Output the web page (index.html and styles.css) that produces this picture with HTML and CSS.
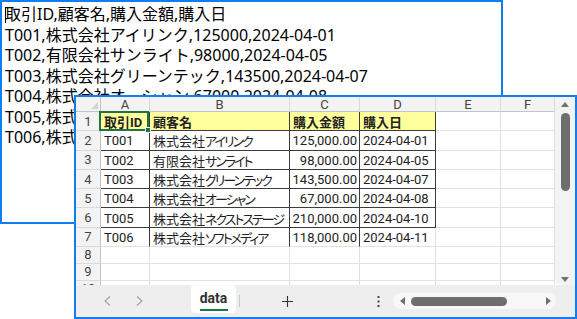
FILE: index.html
```html
<!DOCTYPE html>
<html lang="ja">
<head>
    <meta charset="UTF-8">
    <title>CSV と Excel</title>
    <link rel="stylesheet" href="styles.css">
</head>
<body>
    <div class="desk">
        <!-- text editor with the raw csv -->
        <div class="win editor">
            <div class="line"><span class="caret"></span>取引ID,顧客名,購入金額,購入日</div>
            <div class="line">T001,株式会社アイリンク,125000,2024-04-01</div>
            <div class="line">T002,有限会社サンライト,98000,2024-04-05</div>
            <div class="line">T003,株式会社グリーンテック,143500,2024-04-07</div>
            <div class="line">T004,株式会社オーシャン,67000,2024-04-08</div>
            <div class="line">T005,株式会社ネクストステージ,210000,2024-04-10</div>
            <div class="line">T006,株式会社ソフトメディア,118000,2024-04-11</div>
        </div>

        <!-- spreadsheet window -->
        <div class="win sheet">
            <div class="main">
                <div class="grid">
                    <div class="c corner"></div>
                    <div class="c hd">A</div>
                    <div class="c hd">B</div>
                    <div class="c hd">C</div>
                    <div class="c hd">D</div>
                    <div class="c hd">E</div>
                    <div class="c hd">F</div>

                    <div class="c rn">1</div>
                    <div class="c y b dr db sel">取引ID</div>
                    <div class="c y b dr db">顧客名</div>
                    <div class="c y b dr db">購入金額</div>
                    <div class="c y b dr db">購入日</div>
                    <div class="c"></div>
                    <div class="c"></div>

                    <div class="c rn">2</div>
                    <div class="c dr db">T001</div>
                    <div class="c dr db">株式会社<span class="k">アイリンク</span></div>
                    <div class="c dr db num">125,000.00</div>
                    <div class="c dr db">2024-04-01</div>
                    <div class="c"></div>
                    <div class="c"></div>

                    <div class="c rn">3</div>
                    <div class="c dr db">T002</div>
                    <div class="c dr db">有限会社<span class="k">サンライト</span></div>
                    <div class="c dr db num">98,000.00</div>
                    <div class="c dr db">2024-04-05</div>
                    <div class="c"></div>
                    <div class="c"></div>

                    <div class="c rn">4</div>
                    <div class="c dr db">T003</div>
                    <div class="c dr db">株式会社<span class="k">グリーンテック</span></div>
                    <div class="c dr db num">143,500.00</div>
                    <div class="c dr db">2024-04-07</div>
                    <div class="c"></div>
                    <div class="c"></div>

                    <div class="c rn">5</div>
                    <div class="c dr db">T004</div>
                    <div class="c dr db">株式会社<span class="k">オーシャン</span></div>
                    <div class="c dr db num">67,000.00</div>
                    <div class="c dr db">2024-04-08</div>
                    <div class="c"></div>
                    <div class="c"></div>

                    <div class="c rn">6</div>
                    <div class="c dr db">T005</div>
                    <div class="c dr db">株式会社<span class="k">ネクストステージ</span></div>
                    <div class="c dr db num">210,000.00</div>
                    <div class="c dr db">2024-04-10</div>
                    <div class="c"></div>
                    <div class="c"></div>

                    <div class="c rn">7</div>
                    <div class="c dr">T006</div>
                    <div class="c dr">株式会社<span class="k">ソフトメディア</span></div>
                    <div class="c dr num">118,000.00</div>
                    <div class="c">2024-04-11</div>
                    <div class="c"></div>
                    <div class="c"></div>

                    <div class="c rn">8</div>
                    <div class="c"></div><div class="c"></div><div class="c"></div>
                    <div class="c"></div><div class="c"></div><div class="c"></div>

                    <div class="c rn">9</div>
                    <div class="c"></div><div class="c"></div><div class="c"></div>
                    <div class="c"></div><div class="c"></div><div class="c"></div>

                    <div class="c rn">10</div>
                    <div class="c"></div><div class="c"></div><div class="c"></div>
                    <div class="c"></div><div class="c"></div><div class="c"></div>
                </div>

                <div class="vscroll">
                    <svg width="8" height="5" viewBox="0 0 8 5"><polygon points="0,5 4,0 8,5" fill="#707070"/></svg>
                    <div class="vthumb"></div>
                    <svg class="down" width="8" height="5" viewBox="0 0 8 5"><polygon points="0,0 8,0 4,5" fill="#707070"/></svg>
                </div>
            </div>

            <div class="tabbar">
                <div class="nav first">
                    <svg width="7" height="10" viewBox="0 0 7 10"><polyline points="6,0.5 1,5 6,9.5" fill="none" stroke="#a0a0a0" stroke-width="1.1"/></svg>
                </div>
                <div class="nav">
                    <svg width="7" height="10" viewBox="0 0 7 10"><polyline points="1,0.5 6,5 1,9.5" fill="none" stroke="#a0a0a0" stroke-width="1.1"/></svg>
                </div>
                <div class="tab">
                    <span class="tab-name">data</span>
                    <span class="tab-line"></span>
                </div>
                <div class="sep"></div>
                <div class="plus">
                    <svg width="11" height="11" viewBox="0 0 11 11"><path d="M5.5 0v11M0 5.5h11" stroke="#333" stroke-width="1.1"/></svg>
                </div>
                <div class="more">
                    <svg width="3" height="11" viewBox="0 0 3 11"><rect x="0.5" y="0" width="2" height="2" fill="#444"/><rect x="0.5" y="4.5" width="2" height="2" fill="#444"/><rect x="0.5" y="9" width="2" height="2" fill="#444"/></svg>
                </div>
                <div class="htrack">
                    <svg width="5" height="8" viewBox="0 0 5 8"><polygon points="5,0 5,8 0,4" fill="#707070"/></svg>
                    <div class="hthumb"></div>
                    <svg class="right" width="5" height="8" viewBox="0 0 5 8"><polygon points="0,0 5,4 0,8" fill="#707070"/></svg>
                </div>
            </div>
        </div>
    </div>
</body>
</html>
```

FILE: styles.css
```css
body {
    margin: 0;
    background-color: #fff;
}

.desk {
    position: relative;
    width: 577px;
    height: 319px;
    overflow: hidden;
}

/* both windows sit on a free canvas */
.win {
    position: absolute;
    box-sizing: border-box;
    border: 2px solid #0f7ef2;
    background-color: #fff;
}

.editor {
    left: 0;
    top: 0;
    width: 503px;
    height: 224px;
    padding: 2px 0 0 3px;
    font-family: "Noto Sans", "Noto Sans CJK JP", sans-serif;
    font-size: 16px;
    line-height: 20.5px;
    color: #000;
    white-space: nowrap;
    overflow: hidden;
}

.caret {
    display: inline-block;
    width: 1px;
    height: 16px;
    margin-right: -1px;
    background-color: #000;
    vertical-align: -3px;
}

.sheet {
    left: 74px;
    top: 95px;
    width: 503px;
    height: 224px;
    display: flex;
    flex-direction: column;
}

.main {
    display: flex;
    height: 188px;
    overflow: hidden;
}

.grid {
    display: grid;
    grid-template-columns: 25px 49px 140px 70px 76px 65px 54px;
    grid-template-rows: 15px repeat(7, 19.3px) 16.6px 17.3px 17px;
    font-family: Roboto, "Noto Sans CJK JP", sans-serif;
    font-size: 13px;
    font-feature-settings: "palt";
    color: #222;
}

.c {
    box-sizing: border-box;
    display: flex;
    align-items: center;
    padding: 1px 2px 0 3px;
    border-right: 1px solid #e1e1e1;
    border-bottom: 1px solid #e1e1e1;
    white-space: nowrap;
    overflow: hidden;
}

/* the sheet font sets katakana narrower than the editor does */
.k {
    letter-spacing: -2px;
}

.hd, .rn, .corner {
    justify-content: center;
    padding: 0;
    background-color: #f3f3f3;
    color: #444;
}

.hd {
    border-right-color: #dadada;
    border-bottom-color: #c4c4c4;
}

.rn {
    border-right-color: #c4c4c4;
    border-bottom-color: #dadada;
}

.corner {
    position: relative;
    border-right-color: #c4c4c4;
    border-bottom-color: #c4c4c4;
}

.corner::after {
    content: "";
    position: absolute;
    right: 2px;
    bottom: 2px;
    border-left: 7px solid transparent;
    border-bottom: 7px solid #d2d2d2;
}

.y {
    background-color: #ffff9c;
}

.b {
    font-weight: bold;
}

.dr {
    border-right-color: #3c3c3c;
}

.db {
    border-bottom-color: #3c3c3c;
}

.num {
    justify-content: flex-end;
}

/* active cell */
.sel {
    position: relative;
    overflow: visible;
}

.sel::after {
    content: "";
    position: absolute;
    left: -2px;
    top: -1px;
    right: 0;
    bottom: -1px;
    border: 2px solid #217346;
}

.sel::before {
    content: "";
    position: absolute;
    right: -2px;
    bottom: -3px;
    width: 4px;
    height: 4px;
    background-color: #217346;
    border: 1px solid #fff;
    z-index: 2;
}

.vscroll {
    width: 20px;
    display: flex;
    flex-direction: column;
    align-items: center;
    padding: 5px 0 3px;
    box-sizing: border-box;
    background-color: #f3f3f3;
    border-bottom-left-radius: 6px;
}

.vthumb {
    width: 9px;
    height: 78px;
    margin-top: 6px;
    border-radius: 5px;
    background-color: #6e6e6e;
}

.vscroll .down {
    margin-top: auto;
}

.tabbar {
    display: flex;
    align-items: center;
    height: 32px;
    background-color: #eeeeee;
    font-family: Roboto, sans-serif;
}

.nav {
    width: 16px;
    display: flex;
    justify-content: center;
    margin-left: 16px;
}

.nav.first {
    margin-left: 23px;
}

.tab {
    align-self: flex-start;
    width: 45px;
    height: 28px;
    margin-left: 44px;
    box-sizing: border-box;
    padding-top: 5px;
    display: flex;
    flex-direction: column;
    align-items: center;
    background-color: #fff;
    border-radius: 4px;
}

.tab-name {
    font-size: 14px;
    font-weight: bold;
    line-height: 16px;
    color: #333;
}

.tab-line {
    width: 28px;
    height: 2px;
    margin-top: 3px;
    background-color: #107c41;
}

.sep {
    width: 1px;
    height: 12px;
    margin-left: 3px;
    background-color: #c8c8c8;
}

.plus {
    width: 20px;
    display: flex;
    justify-content: center;
    margin-left: 37px;
}

.more {
    width: 10px;
    display: flex;
    justify-content: center;
    margin-left: 76px;
}

.htrack {
    width: 163px;
    height: 16px;
    margin-left: 10px;
    box-sizing: border-box;
    padding: 0 5px 0 7px;
    display: flex;
    align-items: center;
    border-radius: 8px;
    background-color: #f8f8f8;
}

.hthumb {
    width: 96px;
    height: 9px;
    margin-left: 6px;
    border-radius: 5px;
    background-color: #6e6e6e;
}

.htrack .right {
    margin-left: auto;
}
```
